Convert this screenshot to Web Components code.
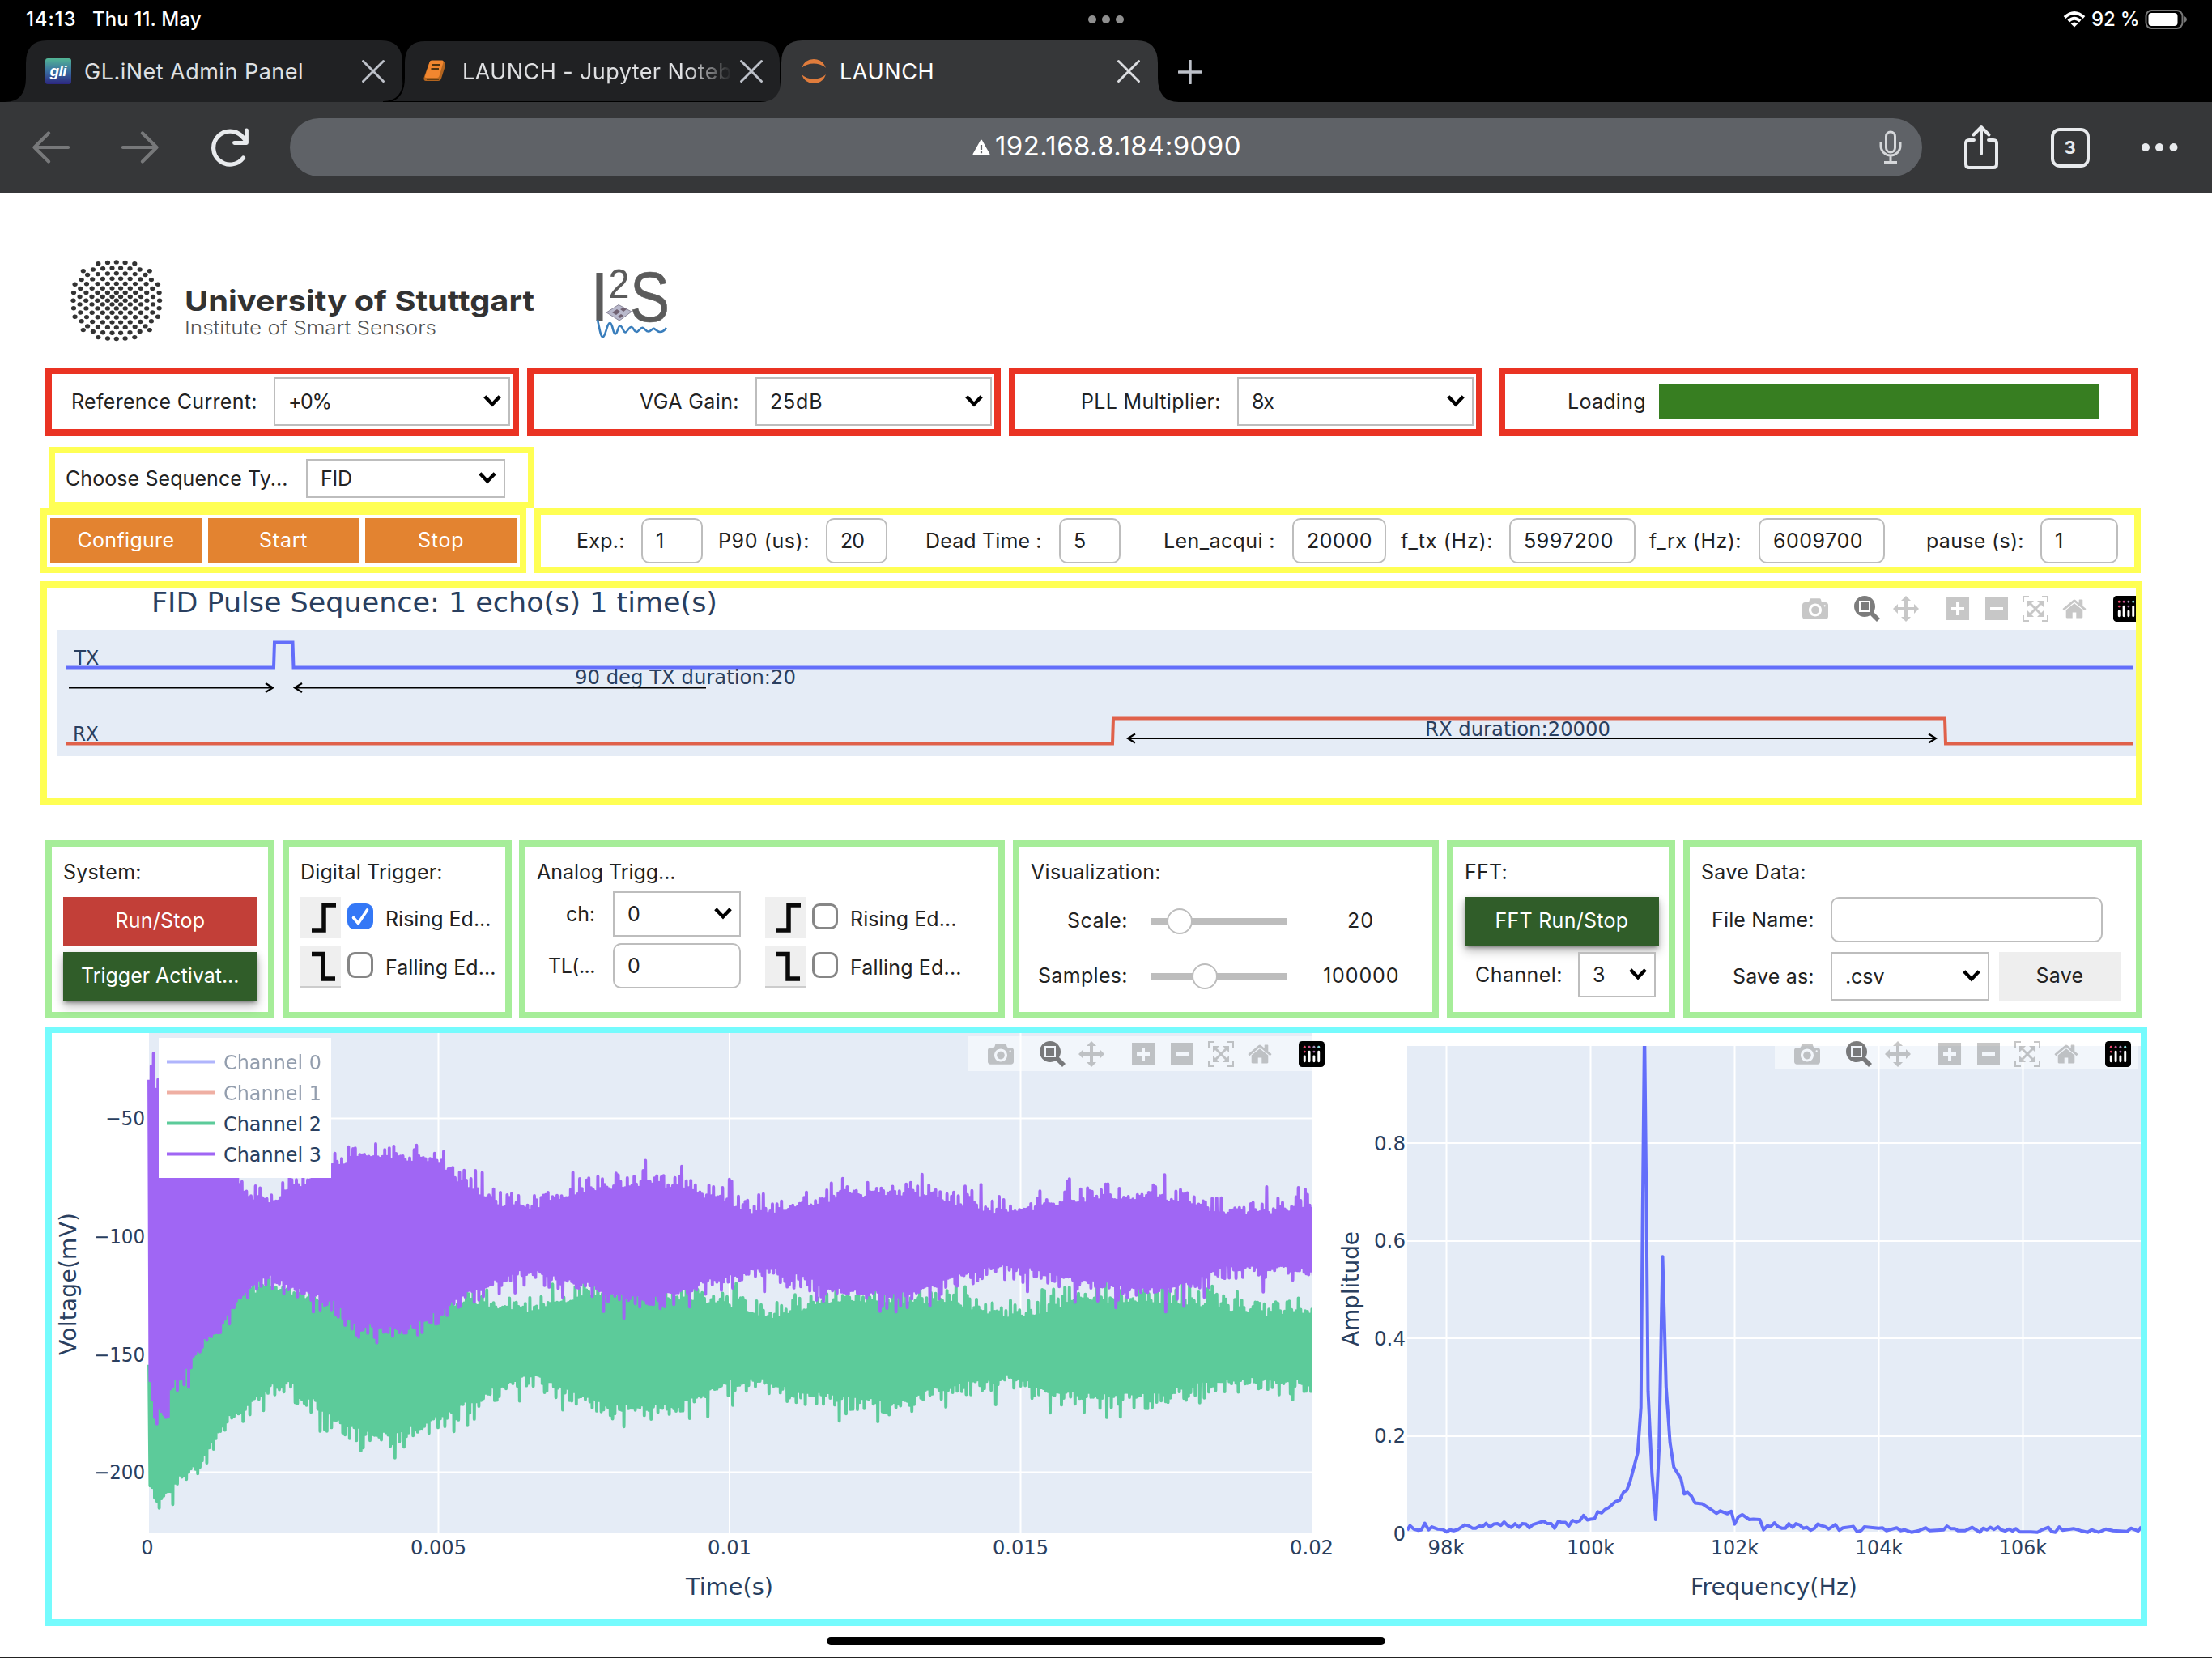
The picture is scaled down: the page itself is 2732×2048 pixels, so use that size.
<!DOCTYPE html>
<html lang="en">
<head>
<meta charset="utf-8">
<title>LAUNCH</title>
<style>
body{margin:0;background:#fff;font-family:Inter,"Liberation Sans",sans-serif;color:#222;width:2732px;height:2048px;overflow:hidden}
</style>
</head>
<body>
<lab-app></lab-app>
<script>
const def=(name,css,html,after)=>customElements.define(name,class extends HTMLElement{
  connectedCallback(){
    if(this.shadowRoot)return;
    const r=this.attachShadow({mode:'open'});
    const a=(k,d='')=>this.getAttribute(k)??d;
    r.innerHTML='<style>*{box-sizing:border-box}:host{box-sizing:border-box;flex:none}'+(typeof css==='function'?css(a):css)+'</style>'+(typeof html==='function'?html(a):html);
    if(after)after.call(this,r,a);
  }
});

/* Text that spreads its letters to fill a given width */
def('fit-text',a=>`:host{display:block;width:${a('w')}px;height:30px;white-space:nowrap;font-size:${a('size',25)}px;line-height:30px;font-weight:${a('weight',400)};color:${a('color','inherit')}}span{display:inline-block;margin-left:-1px}`,
 '<span><slot></slot></span>',
 function(r,a){const s=r.querySelector('span'),n=this.textContent.length;
  const d=(+a('w')+(n<4?0:1.5)-s.getBoundingClientRect().width)/Math.max(1,n-1);
  if(n>1)s.style.letterSpacing=d.toFixed(3)+'px';});

def('ui-box',a=>`:host{display:flex;width:${a('w')}px;height:${a('h')}px;border:8px solid ${a('c')};align-items:${a('align','center')};position:relative;flex-direction:${a('dir','row')}}`,'<slot></slot>');
def('ui-row',a=>`:host{display:flex;height:${a('h','auto')}${a('h')?'px':''};align-items:${a('align','center')}}`,'<slot></slot>');
def('ui-chevron',':host{display:block}svg{display:block}','<svg width="24" height="16" viewBox="0 0 24 16"><path d="M2.8 2.8 12 12.4 21.2 2.8" fill="none" stroke="#000" stroke-width="4.4"/></svg>');
def('ui-select',a=>`:host{display:flex;align-items:center;justify-content:space-between;width:${a('w')}px;height:${a('h',60)}px;border:2px solid #bdbdbd;padding:0 ${a('pr',8)}px 0 17px;background:#fff}ui-chevron{position:relative;top:-1px}`,'<slot></slot><ui-chevron></ui-chevron>');
def('ui-input',a=>`:host{display:flex;align-items:center;width:${a('w')}px;height:56px;border:2px solid #bdbdbd;border-radius:10px;padding-left:17px;background:#fff}`,'<slot></slot>');
def('ui-button',a=>`:host{display:flex;align-items:center;justify-content:center;width:${a('w')}px;height:${a('h',60)}px;padding-bottom:2px;background:${a('c')};color:${a('fg','#fff')};${a('raised')?'box-shadow:0 4px 4px rgba(0,0,0,.14),0 6px 2px -4px rgba(0,0,0,.2),0 2px 10px rgba(0,0,0,.12),0 8px 12px rgba(0,0,0,.2)':''}}`,'<slot></slot>');
def('ui-check',a=>`:host{display:block;width:32px;height:32px;border-radius:9px;${a('on')?'background:#3478f6':'border:3px solid #868686;background:#fff'}}svg{display:block}`,
 a=>a('on')?'<svg width="32" height="32" viewBox="0 0 32 32"><path d="M7.5 17.5 13.5 24.500 24.500 8" fill="none" stroke="#fff" stroke-width="3.600" stroke-linecap="round" stroke-linejoin="round"/></svg>':'');
def('edge-icon',a=>`:host{display:block;width:50px;height:51px;background:#efefef;${a('fall')?'border-bottom:2px solid #ccc':''}}svg{display:block}`,
 a=>`<svg width="50" height="50" viewBox="0 0 50 50"><path d="${a('fall')?'M14 9.500H28V40H43':'M14 41H29V10H44'}" fill="none" stroke="#0a0a0a" stroke-width="5.500"/></svg>`);
def('ui-slider',a=>`:host{display:flex;align-items:center;width:168px;height:32px}.t{width:168px;height:8px;background:#bdbdbd;display:flex;align-items:center}.k{flex:none;width:32px;height:32px;border:2px solid #bdbdbd;border-radius:50%;background:#fff;margin-left:${a('x')}px}`,'<div class="t"><div class="k"></div></div>');

const PI={
camera:[1000,'m500 450c-83 0-150-67-150-150 0-83 67-150 150-150 83 0 150 67 150 150 0 83-67 150-150 150z m400 150h-120c-16 0-34 13-39 29l-31 93c-6 15-23 28-40 28h-340c-16 0-34-13-39-28l-31-94c-6-15-23-28-40-28h-120c-55 0-100-45-100-100v-450c0-55 45-100 100-100h800c55 0 100 45 100 100v450c0 55-45 100-100 100z m-400-550c-138 0-250 112-250 250 0 138 112 250 250 250 138 0 250-112 250-250 0-138-112-250-250-250z m365 380c-19 0-35 16-35 35 0 19 16 35 35 35 19 0 35-16 35-35 0-19-16-35-35-35z'],
zoom:[1000,'m1000-25l-250 251c40 63 63 138 63 218 0 224-182 406-407 406-224 0-406-182-406-406s183-406 407-406c80 0 155 22 218 62l250-250 125 125z m-812 250l0 438 437 0 0-438-437 0z m62 375l313 0 0-312-313 0 0 312z'],
pan:[1000,'m1000 350l-187 188 0-125-250 0 0 250 125 0-188 187-187-187 125 0 0-250-250 0 0 125-188-188 186-187 0 125 252 0 0-250-125 0 187-188 188 188-125 0 0 250 250 0 0-126 187 188z'],
plus:[875,'m1 787l0-875 875 0 0 875-875 0z m687-500l-187 0 0-187-125 0 0 187-188 0 0 125 188 0 0 187 125 0 0-187 187 0 0-125z'],
minus:[875,'m0 788l0-876 875 0 0 876-875 0z m688-500l-500 0 0 125 500 0 0-125z'],
auto:[1000,'m250 850l-187 0-63 0 0-62 0-188 63 0 0 188 187 0 0 62z m688 0l-188 0 0-62 188 0 0-188 62 0 0 188 0 62-62 0z m-875-938l0 188-63 0 0-188 0-62 63 0 187 0 0 62-187 0z m875 188l0-188-188 0 0-62 188 0 62 0 0 62 0 188-62 0z m-125 188l-1 0-93-94-156 156 156 156 92-93 2 0 0 250-250 0 0-2 93-92-156-156-156 156 94 92 0 2-250 0 0-250 0 0 93 93 157-156-157-156-93 94 0 0 0-250 250 0 0 0-94 93 156 157 156-157-93-93 0 0 250 0 0 250z'],
home:[928.6,'m786 296v-267q0-15-11-26t-25-10h-214v214h-143v-214h-214q-15 0-25 10t-11 26v267q0 1 0 2t0 2l321 264 321-264q1-1 1-4z m124 39l-34-41q-5-5-12-6h-2q-7 0-12 3l-386 322-386-322q-7-4-13-4-7 2-12 7l-35 41q-4 5-3 13t6 12l401 334q18 15 42 15t43-15l136-114v109q0 8 5 13t13 5h107q8 0 13-5t5-13v-227l122-102q5-5 6-12t-4-13z']};
def('bar-icon',a=>`:host{display:flex;width:48px;height:32px;align-items:center;justify-content:center}svg{display:block}path{fill:${a('on')?'rgba(68,68,68,.7)':'rgba(68,68,68,.3)'}}`,
 a=>{const[w,d]=PI[a('k')];return `<svg width="32" height="32" viewBox="${(w-1000)/2} 0 1000 1000"><path transform="matrix(1 0 0 -1 0 850)" d="${d}"/></svg>`});
def('plot-modebar',a=>`:host{position:absolute;right:${a('right')}px;top:${a('top')}px;display:flex;width:${a('w',448)}px;overflow:hidden;height:43px;padding-top:${a('pad',8)}px;background:${a('bg','rgba(255,255,255,.5)')}}.g{display:flex;flex:none;margin-left:16px}.l{width:48px;padding-left:8px}svg{display:block;flex:none}`,
 `<div class="g"><bar-icon k="camera"></bar-icon></div><div class="g"><bar-icon k="zoom" on="1"></bar-icon><bar-icon k="pan"></bar-icon></div>
 <div class="g"><bar-icon k="plus"></bar-icon><bar-icon k="minus"></bar-icon><bar-icon k="auto"></bar-icon><bar-icon k="home"></bar-icon></div>
 <div class="g l"><svg width="32" height="32" viewBox="0 0 132 132"><rect width="132" height="132" rx="18"/><circle cx="30" cy="30" r="6" fill="#f04a6e"/><circle cx="54" cy="30" r="6" fill="#c8508c"/><circle cx="78" cy="30" r="6" fill="#a58fb8"/><circle cx="102" cy="30" r="6" fill="#8ce0e0"/><circle cx="30" cy="54" r="6" fill="#e8406a"/><circle cx="78" cy="54" r="6" fill="#a46fa8"/><g stroke="#fff" stroke-width="12" stroke-linecap="round"><path d="M30 78v24M54 54v48M78 78v24M102 54v48"/></g></svg></div>`);

/* Browser tab with flared feet */
def('browser-tab',a=>`:host{position:relative;display:flex;align-items:center;width:465px;height:76px;margin-left:${a('ml',0)}px}.bg{position:absolute;left:-26px;top:0}.ic{position:relative;margin-left:24px;width:32px;height:32px}.tx{position:relative;margin-left:15px;flex:1;overflow:hidden;height:40px;padding:6px 0 4px 2px;${a('fade')?'-webkit-mask:linear-gradient(90deg,#000 280px,transparent 334px)':''}}.x{position:relative;margin-right:21px;margin-left:4px;padding:0}svg{display:block}`,
 a=>`<svg class="bg" width="517" height="76" viewBox="-26 0 517 76"><path d="M-26 76Q0 76 0 46V28Q0 0 26 0H439Q465 0 465 28V46Q465 76 491 76Z" fill="${a('bg')}" ${a('line')?'stroke="#000" stroke-width="2"':''}/></svg>
 <div class="ic"><slot name="icon"></slot></div><div class="tx"><slot></slot></div>
 <svg class="x" width="30" height="30" viewBox="0 0 30 30"><path d="M2.500 2.500 27.500 27.500M27.500 2.500 2.500 27.500" stroke="${a('xc','#bdc1c9')}" stroke-width="3" stroke-linecap="round"/></svg>`);

def('browser-chrome',`:host{display:block;background:#000;height:239px}
.s{display:flex;height:50px;align-items:center;padding:0 30px 2px 33px;color:#fff;position:relative}
.sp{flex:1}.tabs{display:flex;height:76px;padding-left:32px;align-items:center;overflow:hidden}
.bar{display:flex;height:112px;background:#363739;align-items:center;border-bottom:0}
.omni{display:flex;align-items:center;width:2016px;height:72px;border-radius:36px;background:#5f6267;color:#fff;margin-left:50px}
.mid{position:absolute;left:1343px;top:18px}
.n{border:4px solid #e8eaed;border-radius:11px;width:48px;height:49px;display:flex;align-items:center;justify-content:center;margin-left:65px;color:#e8eaed}
svg{display:block;flex:none}`,
`<div class="s"><fit-text w="60" size="24" weight="500">14:13</fit-text><fit-text w="133" size="24" weight="500" style="margin-left:22px">Thu 11. May</fit-text>
<svg class="mid" width="46" height="12"><circle cx="6" cy="6" r="5" fill="#8e8e8e"/><circle cx="23" cy="6" r="5" fill="#8e8e8e"/><circle cx="40" cy="6" r="5" fill="#8e8e8e"/></svg>
<div class="sp"></div>
<svg width="28" height="20" viewBox="0 0 28 20"><g fill="none" stroke="#fff" stroke-width="3.800"><path d="M2 7.500Q14-3.500 26 7.500"/><path d="M6.700 12Q14 5.500 21.300 12"/></g><path d="M14 19.500 9.700 15.200Q14 11.600 18.300 15.200Z" fill="#fff"/></svg>
<fit-text w="58" size="24" weight="500" style="margin-left:8px">92 %</fit-text>
<svg style="margin-left:7px" width="53" height="26" viewBox="0 0 53 26"><rect x="1.500" y="2" width="45" height="22" rx="7" fill="none" stroke="#777" stroke-width="2"/><rect x="4.500" y="5" width="36" height="16" rx="4" fill="#fff"/><path d="M49 9q3 1.500 3 4t-3 4z" fill="#777"/></svg></div>
<div class="tabs">
<browser-tab bg="#202123"><svg slot="icon" width="32" height="32" viewBox="0 0 32 32"><defs><linearGradient id="g" x1="0" y1="0" x2="0" y2="1"><stop offset="0" stop-color="#52b595"/><stop offset=".5" stop-color="#3a6fa0"/><stop offset="1" stop-color="#2c2680"/></linearGradient></defs><rect width="32" height="32" rx="3" fill="url(#g)"/><text x="16" y="22" text-anchor="middle" textLength="21" font-family="Liberation Sans" font-style="italic" font-weight="700" font-size="19" fill="#fff">gli</text></svg><fit-text w="269" size="27" color="#dfe0e2">GL.iNet Admin Panel</fit-text></browser-tab>
<browser-tab bg="#202123" ml="2" line="1" fade="1"><svg slot="icon" width="32" height="32" viewBox="0 0 32 32"><path d="M7 6Q7.500 3 10 3H24L26 5 27 9 22 25Q21 28 18 28H3Q0 28 .5 24Z" fill="#b4651f"/><path d="M10 2.500H23Q25 2.500 24.500 5L19.500 22Q19 24 17 24H3Q1.500 24 2 22L7.500 5Q8 2.500 10 2.500Z" fill="#f1862f"/><path d="M11 8h9.500M9.500 13h9.500" stroke="#50330f" stroke-width="2.200"/><path d="M4 26h15" stroke="#50330f" stroke-width="1.500"/></svg><fit-text w="331" size="27" color="#dfe0e2">LAUNCH - Jupyter Noteb</fit-text></browser-tab>
<browser-tab bg="#363739" ml="1" xc="#dcdde0"><svg slot="icon" width="32" height="32" viewBox="0 0 32 32"><path d="M1 12Q5 1 16 1T31 12Q25 6.500 16 6.500T1 12ZM1 20Q5 31 16 31T31 20Q25 25.500 16 25.500T1 20Z" fill="#e07c3c"/></svg><fit-text w="115" size="27" color="#fff">LAUNCH</fit-text></browser-tab>
<svg style="margin-left:25px;position:relative;top:1px" width="30" height="30" viewBox="0 0 30 30"><path d="M15 1V29M1 15H29" stroke="#bdc1c9" stroke-width="3.400" stroke-linecap="round"/></svg></div>
<div class="bar">
<svg style="margin-left:40px" width="46" height="42" viewBox="0 0 46 42"><path d="M44 21H3M20 3.500 2.500 21 20 38.500" fill="none" stroke="#77787a" stroke-width="4.200" stroke-linecap="round" stroke-linejoin="round"/></svg>
<svg style="margin-left:64px" width="46" height="42" viewBox="0 0 46 42"><path d="M2 21H43M26 3.500 43.500 21 26 38.500" fill="none" stroke="#77787a" stroke-width="4.200" stroke-linecap="round" stroke-linejoin="round"/></svg>
<svg style="margin-left:64px" width="48" height="48" viewBox="0 0 48 48"><path d="M40.500 37A20.500 20.500 0 1 1 39 10.500L43 15" fill="none" stroke="#e8eaed" stroke-width="5.200" stroke-linecap="round"/><path d="M44.500 3V18.500H29.500" fill="none" stroke="#e8eaed" stroke-width="4.800" stroke-linecap="round" stroke-linejoin="round"/></svg>
<div class="omni"><svg style="margin-left:843px" width="22" height="20" viewBox="0 0 22 20"><path d="M11 1.500 20.500 18.500H1.500Z" fill="#fff" stroke="#fff" stroke-width="2" stroke-linejoin="round"/><path d="M11 7v6M11 15v2.300" stroke="#5f6267" stroke-width="2.200"/></svg>
<fit-text w="302" size="33" style="margin-left:7px;margin-top:-4px">192.168.8.184:9090</fit-text><div class="sp"></div>
<svg style="margin-right:24px" width="30" height="42" viewBox="0 0 30 42"><rect x="9.500" y="2" width="11" height="25" rx="5.500" fill="none" stroke="#d5d7da" stroke-width="3"/><path d="M3 15v4a12 12 0 0 0 24 0v-4M15 32v7M7 39.500h16" fill="none" stroke="#d5d7da" stroke-width="3"/></svg></div>
<svg style="margin-left:50px" width="46" height="56" viewBox="0 0 46 56"><path d="M14 19H8Q4 19 4 23V49Q4 53 8 53H38Q42 53 42 49V23Q42 19 38 19H32M23 36V3M13.500 12.500 23 3 32.500 12.500" fill="none" stroke="#e8eaed" stroke-width="4" stroke-linecap="round" stroke-linejoin="round"/></svg>
<div class="n" style="margin-left:63px"><fit-text w="13" size="22" weight="700">3</fit-text></div>
<svg style="margin-left:63px" width="48" height="12"><g fill="#e8eaed"><circle cx="6" cy="6" r="5"/><circle cx="23" cy="6" r="5"/><circle cx="40.500" cy="6" r="5"/></g></svg>
</div>`);

/* Institute logos */
def('brand-logos',':host{display:block;width:800px;height:120px;padding-left:80px}svg{display:block}','<svg width="760" height="120" viewBox="80 310 760 120"></svg>',function(r){
  let s='';const f=v=>Math.sign(v)*(13.5*Math.abs(v)+.53*v*v);
  for(let i=-8;i<=8;i++)for(let j=-8;j<=8;j++){
    if((i+j)&1||Math.abs(i)+Math.abs(j)>14||Math.abs(i)+Math.abs(j)==14&&Math.abs(i)!=7)continue;
    const k=1-.16*(i/8)**2*(j/8)**2;
    s+=`<ellipse cx="${(143.8+f(i)*1.127*k/3).toFixed(1)}" cy="${(371.2+f(j)*k/3).toFixed(1)}" rx="3.100" ry="2.700"/>`;}
  r.querySelector('svg').innerHTML=`<g fill="#333">${s}</g>
  <text x="228" y="384" font-family="Inter" font-weight="700" font-size="34.500" fill="#323232" textLength="432" lengthAdjust="spacingAndGlyphs">University of Stuttgart</text>
  <text x="228" y="413" font-family="Inter" font-weight="300" font-size="22.500" fill="#555" textLength="311" lengthAdjust="spacingAndGlyphs">Institute of Smart Sensors</text>
  <g font-family="Liberation Sans" fill="#5b5b5b"><text x="728.500" y="396" font-size="85" textLength="24" lengthAdjust="spacingAndGlyphs">I</text><text x="751.500" y="368" font-size="50" textLength="26" lengthAdjust="spacingAndGlyphs">2</text><text x="778" y="397" font-size="87" textLength="49" lengthAdjust="spacingAndGlyphs" stroke="#5b5b5b" stroke-width=".7">S</text></g>
  <path d="M749 386 764 376.500 780 385 765 396Z" fill="#b9b9cc" stroke="#8b8799" stroke-width="1"/><path d="M756 386l6-4 4 3-5 4zM766 382l4-2 4 2-4 3zM763 391l4-3 3 2-4 3z" fill="#6f6070"/>
  <path d="M738 395C741 408 742 417 745 416S750 398 753.500 399 757 413 760 412.500 763 402 766 402.500 770 411 772.500 410.500 777 403 780 404 783 410 786 410 791 404 794 405 798 410 801 409.500 806 405 808 406 812 410 815 410 821 408 823 405" fill="none" stroke="#3a7ebc" stroke-width="2.600"/>`;
});

const T=(x,y,t,w,o={})=>`<text x="${x}" y="${y}" font-size="${o.s||24}" text-anchor="${o.a||'start'}" ${w?`textLength="${w}" lengthAdjust="spacingAndGlyphs"`:''} ${o.x||''}>${t}</text>`;
const PCSS=':host{display:block;position:relative}svg{display:block;font-family:"DejaVu Sans",Verdana,sans-serif;fill:#2a3f5f}';

def('pulse-plot',PCSS+':host{width:2580px;height:260px}svg{overflow:visible}',
`<svg width="2580" height="260" viewBox="58 726 2580 260"><rect x="70" y="778" width="2568" height="156" fill="#e5ecf6"/>
<path d="M82 824.500H338L339 793.500H361.500L362.500 824.500H2634" fill="none" stroke="#636efa" stroke-width="4"/>
<path d="M82 918.500H1374L1375 887.500H2402L2403 918.500H2634" fill="none" stroke="#e0614a" stroke-width="4"/>
${T(187,756,'FID Pulse Sequence: 1 echo(s) 1 time(s)',699,{s:34})}${T(91.5,821,'TX',31)}${T(90,915,'RX',32)}
${T(710,845,'90 deg TX duration:20',273)}${T(1760,909,'RX duration:20000',229)}
<g fill="none" stroke="#000" stroke-width="2.200"><path d="M85 849.500H336M364 849.500H872M1394 912H2390"/></g>
<g fill="none" stroke="#000" stroke-width="2.200"><path d="M328 844l9 5.500-9 5.500M373 844l-9 5.500 9 5.500M1402 906.500l-9 5.500 9 5.500M2382 906.500l9 5.500-9 5.500"/></g></svg>
<plot-modebar right="0" w="436" top="2" bg="none"></plot-modebar>`);

/* Deterministic noise for the sampled signals */
function rng(seed){return()=>{seed|=0;seed=seed+0x6D2B79F5|0;let t=Math.imul(seed^seed>>>15,1|seed);t=t+Math.imul(t^t>>>7,61|t)^t;return((t^t>>>14)>>>0)/4294967296}}
const lerp=(p,x)=>{let i=0;while(i<p.length-4&&p[i+2]<x)i+=2;const q=Math.min(1,Math.max(0,(x-p[i])/(p[i+2]-p[i])));return p[i+1]+(p[i+3]-p[i+1])*q};
function band(top,bot,seed){const R=rng(seed);let d='M';const n=()=>{const u=R(),v=R();return u<.09?16+v*20:u<.45?7+v*14:v*9};
  for(let x=184;x<=1621;x+=2.8){d+=`${x.toFixed(1)} ${(lerp(top,x)-n()+3).toFixed(1)}L${(x+1.4).toFixed(1)} ${(lerp(bot,x)+n()-3).toFixed(1)}L`;}
  return d.slice(0,-1);}
const pT=[184,1344,186,1344,187,1316,191,1316,192,1346,200,1344,290,1459,310,1481,340,1487,360,1472,410,1442,430,1435,450,1430,480,1432,510,1434,540,1440,570,1462,600,1478,620,1490,660,1493,690,1482,720,1472,760,1467,800,1463,830,1469,860,1475,900,1489,930,1499,960,1498,1000,1489,1050,1480,1100,1475,1140,1480,1170,1488,1200,1492,1255,1502,1300,1490,1370,1480,1430,1480,1490,1495,1540,1501,1580,1497,1620,1493];
const pB=[184,1696,188,1742,204,1742,206,1755,209,1712,230,1688,250,1656,270,1640,290,1605,310,1582,330,1574,350,1584,380,1595,410,1606,440,1634,470,1640,510,1636,540,1617,570,1600,600,1584,640,1570,660,1570,690,1575,730,1586,770,1600,800,1602,840,1594,870,1582,900,1574,940,1564,990,1577,1030,1592,1080,1596,1120,1596,1160,1583,1210,1565,1250,1564,1300,1573,1370,1586,1420,1592,1470,1584,1510,1565,1560,1563,1620,1570];
const gT=[184,1700,300,1600,340,1592,360,1600,500,1620,590,1610,630,1620,660,1620,700,1607,760,1604,860,1607,900,1615,955,1628,990,1618,1030,1608,1130,1608,1180,1612,1230,1626,1260,1627,1300,1618,1340,1608,1430,1608,1500,1614,1550,1626,1600,1622,1620,1625];
const gB=[184,1832,190,1845,200,1845,215,1826,230,1815,245,1806,260,1778,280,1751,300,1738,330,1709,360,1708,380,1724,410,1750,440,1764,470,1771,500,1766,530,1755,560,1739,600,1720,630,1700,650,1698,680,1706,720,1724,760,1736,800,1737,830,1735,870,1720,900,1705,940,1702,970,1715,1000,1718,1060,1727,1110,1732,1150,1716,1200,1705,1250,1700,1300,1720,1370,1722,1420,1723,1480,1708,1530,1702,1570,1705,1620,1706];
const leg=(y,c,t,o)=>`<g opacity="${o}"><path d="M206 ${y}h60" stroke="${c}" stroke-width="4"/>${T(276,y+9.5,t,121)}</g>`;
def('voltage-plot',PCSS+':host{width:1586px;height:724px}',
`<svg width="1586" height="724" viewBox="64 1276 1586 724"><defs><clipPath id="c"><rect x="181" y="1276" width="1439" height="618"/></clipPath></defs>
<rect x="184" y="1276" width="1436" height="618" fill="#e5ecf6"/><path d="M541.500 1276V1894M901 1276V1894M1260.500 1276V1894M184 1381.500H1620M184 1527.500H1620M184 1673H1620M184 1818.500H1620" stroke="#fff" stroke-width="2"/>
<g clip-path="url(#c)" fill="none" stroke-width="3.900" stroke-linejoin="round"><path d="${band(gT,gB,7)}" stroke="#5ccb9a"/><path d="${band(pT,pB,21)}" stroke="#a066f4"/></g>
<rect x="196" y="1282" width="213" height="173" fill="#fff"/>
${leg(1311.5,'#636efa','Channel 0',.5)}${leg(1349.5,'#e0614a','Channel 1',.5)}${leg(1387.5,'#5ccb9a','Channel 2',1)}${leg(1425.500,'#a066f4','Channel 3',1)}
${T(179,1390,'−50',49,{a:'end'})}${T(179,1536,'−100',63,{a:'end'})}${T(179,1682,'−150',63,{a:'end'})}${T(179,1827,'−200',63,{a:'end'})}
${T(182,1920,'0',0,{a:'middle'})}${T(541.5,1920,'0.005',69,{a:'middle'})}${T(901,1920,'0.01',54,{a:'middle'})}${T(1260.5,1920,'0.015',69,{a:'middle'})}${T(1620,1920,'0.02',54,{a:'middle'})}
${T(901,1970,'Time(s)',108,{a:'middle',s:28})}<text transform="translate(93.500 1586) rotate(-90)" text-anchor="middle" font-size="28" textLength="176">Voltage(mV)</text></svg>
<plot-modebar right="6" top="4" pad="6"></plot-modebar>`);

const F=[145,1258,150,1247,157,1255,165,1258,171,1257,177,1241,184,1257,190,1250,200,1255,210,1256,217,1262,223,1257,230,1259,238,1256,250,1245,257,1247,264,1253,270,1253,277,1248,283,1249,289,1241,296,1250,303,1243,310,1242,316,1246,322,1238,329,1247,335,1251,342,1242,349,1251,355,1242,362,1243,368,1252,375,1244,382,1241,394,1236,401,1242,408,1242,414,1253,421,1236,427,1239,434,1239,440,1248,447,1234,454,1238,460,1235,467,1222,474,1233,480,1231,487,1230,493,1213,500,1216,507,1207,513,1203,526,1188,533,1185,540,1166,546,1161,552,1140,559,1105,566,1070,572,960,575,480,578.5,40,582,480,585,920,592,1120,599,1232,605,1060,611.5,594,618,910,625,1045,632,1105,645,1133,651,1170,657,1166,664,1175,671,1192,684,1194,697,1205,710,1217,717,1211,730,1218,737,1212,743,1243,750,1225,757,1220,770,1232,777,1231,789,1232,796,1257,803,1247,809,1249,816,1240,822,1249,829,1253,836,1253,842,1242,849,1251,855,1242,862,1245,868,1253,875,1251,882,1258,889,1253,895,1243,902,1247,908,1249,915,1255,927,1244,934,1258,941,1252,960,1249,967,1262,974,1259,980,1250,1006,1253,1013,1252,1020,1259,1039,1252,1046,1259,1053,1257,1066,1263,1080,1259,1092,1252,1099,1259,1125,1257,1131,1248,1138,1254,1145,1254,1151,1259,1164,1259,1177,1251,1191,1263,1197,1253,1204,1257,1210,1251,1217,1256,1224,1250,1230,1257,1237,1260,1244,1255,1251,1260,1257,1254,1264,1262,1284,1262,1296,1263,1303,1258,1316,1251,1322,1261,1329,1263,1336,1250,1342,1258,1362,1254,1375,1259,1388,1263,1395,1257,1401,1260,1408,1263,1421,1255,1434,1259,1460,1261,1467,1253,1480,1260,1486,1250];
let fd='';for(let i=0;i<F.length;i+=2)fd+=(i?'L':'M')+(1640+F[i]/1.479).toFixed(1)+' '+(1250+F[i+1]/1.965).toFixed(1);
def('fft-plot',PCSS+':host{width:994px;height:724px;overflow:hidden}',
`<svg width="994" height="724" viewBox="1650 1276 994 724"><defs><clipPath id="c"><rect x="1738" y="1292" width="906" height="604"/></clipPath></defs><rect x="1738" y="1292" width="906" height="600" fill="#e5ecf6"/>
<path d="M1786.500 1292V1892M1964.500 1292V1892M2142.500 1292V1892M2320.500 1292V1892M2498.500 1292V1892M1738 1412H2644M1738 1533H2644M1738 1653H2644M1738 1774H2644" stroke="#fff" stroke-width="2"/>
<path clip-path="url(#c)" d="${fd}" fill="none" stroke="#636efa" stroke-width="4" stroke-linejoin="round"/>
${T(1736,1421,'0.8',39,{a:'end'})}${T(1736,1541,'0.6',39,{a:'end'})}${T(1736,1662,'0.4',39,{a:'end'})}${T(1736,1782,'0.2',39,{a:'end'})}${T(1736,1903,'0',0,{a:'end'})}
${T(1786,1920,'98k',45,{a:'middle'})}${T(1964.5,1920,'100k',59,{a:'middle'})}${T(2142.5,1920,'102k',59,{a:'middle'})}${T(2320.5,1920,'104k',59,{a:'middle'})}${T(2498.5,1920,'106k',59,{a:'middle'})}
${T(2191,1970,'Frequency(Hz)',206,{a:'middle',s:28})}<text transform="translate(1677.500 1592) rotate(-90)" text-anchor="middle" font-size="28" textLength="142">Amplitude</text></svg>
<plot-modebar right="4" top="2" pad="8"></plot-modebar>`);

const ft=(w,t,ml=0,mt=0)=>`<fit-text w="${w}" style="margin-left:${ml}px;margin-top:${mt}px">${t}</fit-text>`;
const edge=(x,a)=>`<edge-icon ${a} style="margin-left:${x}px;margin-top:${a?-7:0}px"></edge-icon>`;
def('lab-app',`:host{display:block;width:2732px;height:2048px;background:#fff;position:relative}
.r{display:flex;align-items:flex-start}.home{width:690px;height:10px;border-radius:5px;background:#000;margin:14px auto 0 1021px}
.base{height:1px;background:#222;margin-top:15px}`,
`<browser-chrome></browser-chrome>
<brand-logos style="margin-top:71px"></brand-logos>
<div class="r" style="padding:24px 0 0 56px">
<ui-box c="#ea3323" w="585" h="84">${ft(228,'Reference Current:',25)}<ui-select w="292" style="margin-left:21px">${ft(54,'+0%')}</ui-select></ui-box>
<ui-box c="#ea3323" w="585" h="84" style="margin-left:10px">${ft(121,'VGA Gain:',132)}<ui-select w="292" style="margin-left:21px">${ft(63,'25dB')}</ui-select></ui-box>
<ui-box c="#ea3323" w="585" h="84" style="margin-left:10px">${ft(171,'PLL Multiplier:',82)}<ui-select w="292" style="margin-left:21px">${ft(28,'8x')}</ui-select></ui-box>
<ui-box c="#ea3323" w="789" h="84" style="margin-left:20px">${ft(95,'Loading',78)}<ui-button w="544" h="44" c="#377e21" style="margin-left:17px"></ui-button></ui-box>
</div>
<div class="r" style="padding:14px 0 0 60px"><ui-box c="#ffff54" w="600" h="76">${ft(273,'Choose Sequence Ty...',14,2)}<ui-select w="246" h="48" style="margin-left:23px;margin-top:2px">${ft(39,'FID')}</ui-select></ui-box></div>
<div class="r" style="padding-left:50px">
<ui-box c="#ffff54" w="600" h="80"><ui-button c="#e38330" w="187" h="56" style="margin-left:4px">${ft(118,'Configure')}</ui-button><ui-button c="#e38330" w="186" h="56" style="margin-left:8px">${ft(58,'Start')}</ui-button><ui-button c="#e38330" w="187" h="56" style="margin-left:8px">${ft(55,'Stop')}</ui-button></ui-box>
<ui-box c="#ffff54" w="1984" h="80" style="margin-left:10px">
${ft(58,'Exp.:',45)}<ui-input w="76" style="margin-left:21px">${ft(11,'1')}</ui-input>
${ft(111,'P90 (us):',20)}<ui-input w="76" style="margin-left:21px">${ft(30,'20')}</ui-input>
${ft(142,'Dead Time :',48)}<ui-input w="76" style="margin-left:22px">${ft(14,'5')}</ui-input>
${ft(136,'Len_acqui :',54)}<ui-input w="116" style="margin-left:22px">${ft(79,'20000')}</ui-input>
${ft(112,'f_tx (Hz):',19)}<ui-input w="156" style="margin-left:21px">${ft(109,'5997200')}</ui-input>
${ft(112,'f_rx (Hz):',18)}<ui-input w="156" style="margin-left:22px">${ft(109,'6009700')}</ui-input>
${ft(119,'pause (s):',52)}<ui-input w="96" style="margin-left:21px">${ft(11,'1')}</ui-input></ui-box>
</div>
<div class="r" style="padding:10px 0 0 50px"><ui-box c="#ffff54" w="2596" h="276" align="flex-start"><pulse-plot></pulse-plot></ui-box></div>
<div class="r" style="padding:44px 0 0 56px">
<ui-box c="#a6ed99" w="283" h="220" dir="column" align="flex-start"><ui-row h="62">${ft(95,'System:',15)}</ui-row><ui-button w="240" c="#c23f38" style="margin-left:14px">${ft(109,'Run/Stop')}</ui-button><ui-button raised="1" w="240" c="#305d29" style="margin:8px 0 0 14px">${ft(194,'Trigger Activat...')}</ui-button></ui-box>
<ui-box c="#a6ed99" w="283" h="220" dir="column" align="flex-start" style="margin-left:10px"><ui-row h="62">${ft(174,'Digital Trigger:',15)}</ui-row>
<ui-row h="68" align="flex-start">${edge(14,'')}<ui-check on="1" style="margin:8px 0 0 8px"></ui-check>${ft(129,'Rising Ed...',16,12)}</ui-row>
<ui-row h="60" align="flex-start">${edge(14,'fall="1"')}<ui-check style="margin:0 0 0 8px"></ui-check>${ft(135,'Falling Ed...',16,4)}</ui-row></ui-box>
<ui-box c="#a6ed99" w="600" h="220" dir="column" align="flex-start" style="margin-left:9px"><ui-row h="55" style="padding-top:7px">${ft(170,'Analog Trigg...',15)}</ui-row>
<ui-row h="64" align="flex-start">${ft(36,'ch:',51,13)}<ui-select w="158" h="56" style="margin-left:21px">${ft(14,'0')}</ui-select><edge-icon style="margin:7px 0 0 30px"></edge-icon><ui-check style="margin:15px 0 0 8px"></ui-check>${ft(130,'Rising Ed...',16,19)}</ui-row>
<ui-row h="60" align="flex-start">${ft(57,'TL(...',29,13)}<ui-input w="158" style="margin-left:22px">${ft(14,'0')}</ui-input><edge-icon fall="1" style="margin:4px 0 0 30px"></edge-icon><ui-check style="margin:11px 0 0 8px"></ui-check>${ft(136,'Falling Ed...',16,15)}</ui-row></ui-box>
<ui-box c="#a6ed99" w="526" h="220" dir="column" align="flex-start" style="margin-left:10px"><ui-row h="62">${ft(159,'Visualization:',15)}</ui-row>
<ui-row h="60">${ft(73,'Scale:',60,-2)}<ui-slider x="20" style="margin-left:29px"></ui-slider>${ft(32,'20',76,-2)}</ui-row>
<ui-row h="60" style="margin-top:8px">${ft(109,'Samples:',24,-2)}<ui-slider x="51" style="margin-left:29px"></ui-slider>${ft(92,'100000',46,-2)}</ui-row></ui-box>
<ui-box c="#a6ed99" w="282" h="220" dir="column" align="flex-start" style="margin-left:10px"><ui-row h="62">${ft(51,'FFT:',15)}</ui-row><ui-button raised="1" w="240" c="#305d29" style="margin-left:14px">${ft(163,'FFT Run/Stop')}</ui-button>
<ui-row h="56" style="margin-top:8px;position:relative">${ft(106,'Channel:',28)}<ui-select w="96" h="56" style="margin-left:20px">${ft(14,'3')}</ui-select></ui-row></ui-box>
<ui-box c="#a6ed99" w="567" h="220" dir="column" align="flex-start" style="margin-left:10px"><ui-row h="62">${ft(128,'Save Data:',15)}</ui-row>
<ui-row h="60" align="flex-start">${ft(125,'File Name:',28,13)}<ui-input w="336" style="margin-left:21px"></ui-input></ui-row>
<ui-row h="60" style="margin-top:8px">${ft(99,'Save as:',54)}<ui-select w="196" style="margin-left:21px">${ft(47,'.csv')}</ui-select><ui-button w="150" c="#eee" fg="#222" style="margin-left:12px">${ft(57,'Save')}</ui-button></ui-row></ui-box>
</div>
<div class="r" style="padding:10px 0 0 56px"><ui-box c="#75fbfd" w="2596" h="740" align="flex-start"><voltage-plot></voltage-plot><fft-plot></fft-plot></ui-box></div>
<div class="home"></div><div class="base"></div>`);
</script>
</body>
</html>
